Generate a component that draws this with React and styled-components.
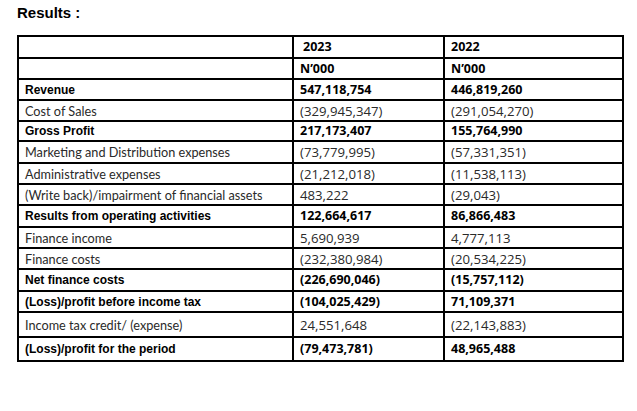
import React from "react";
import styled, { createGlobalStyle } from "styled-components";

const GlobalStyle = createGlobalStyle`
    html, body {
        margin: 0;
        padding: 0;
        background: #ffffff;
    }
`;

const Page = styled.div`
    width: 637px;
    height: 411px;
    padding: 4px 0 0 17px;
    box-sizing: border-box;
    background: #ffffff;
`;

const Title = styled.h2`
    margin: 0 0 14px 0;
    font-family: "Liberation Sans", Arial, sans-serif;
    font-weight: 700;
    font-size: 15px;
    line-height: 17px;
    color: #000;
`;

const Table = styled.table`
    border-collapse: collapse;
    table-layout: fixed;
    width: 605px;
    border: 2px solid #000;
`;

const Row = styled.tr`
    height: ${(props) => props.h}px;
`;

const Cell = styled.td`
    border: 2px solid #000;
    padding: 0 0 0 ${(props) => (props.indent ? 9 : 6)}px;
    vertical-align: middle;
    white-space: nowrap;
    line-height: 14px;
    font-family: ${(props) =>
        props.num
            ? `"Open Sans", "Noto Sans", sans-serif`
            : props.bold
            ? `"Liberation Sans", Arial, sans-serif`
            : `Lato, "Open Sans", sans-serif`};
    font-size: ${(props) =>
        props.num ? (props.bold ? 12.5 : 13.2) : props.bold ? 12 : 12.7}px;
    font-weight: ${(props) => (props.bold ? 700 : 400)};
    color: ${(props) => (props.bold ? "#000" : "#2a2a2a")};
`;

const rows = [
    { label: "Revenue", a: "547,118,754", b: "446,819,260", bold: true, h: 21 },
    { label: "Cost of Sales", a: "(329,945,347)", b: "(291,054,270)", h: 21 },
    { label: "Gross Profit", a: "217,173,407", b: "155,764,990", bold: true, h: 20 },
    { label: "Marketing and Distribution expenses", a: "(73,779,995)", b: "(57,331,351)", h: 22 },
    { label: "Administrative expenses", a: "(21,212,018)", b: "(11,538,113)", h: 21 },
    { label: "(Write back)/impairment of financial assets", a: "483,222", b: "(29,043)", h: 21 },
    { label: "Results from operating activities", a: "122,664,617", b: "86,866,483", bold: true, h: 22 },
    { label: "Finance income", a: "5,690,939", b: "4,777,113", h: 21 },
    { label: "Finance costs", a: "(232,380,984)", b: "(20,534,225)", h: 21 },
    { label: "Net finance costs", a: "(226,690,046)", b: "(15,757,112)", bold: true, h: 22 },
    { label: "(Loss)/profit before income tax", a: "(104,025,429)", b: "71,109,371", bold: true, h: 21 },
    { label: "Income tax credit/ (expense)", a: "24,551,648", b: "(22,143,883)", h: 25 },
    { label: "(Loss)/profit for the period", a: "(79,473,781)", b: "48,965,488", bold: true, h: 24 },
];

export default function App() {
    return (
        <>
            <GlobalStyle />
            <Page>
                <Title>Results :</Title>
                <Table>
                    <colgroup>
                        <col style={{ width: 275 }} />
                        <col style={{ width: 151 }} />
                        <col style={{ width: 179 }} />
                    </colgroup>
                    <tbody>
                        <Row h={22}>
                            <Cell />
                            <Cell num bold indent>
                                2023
                            </Cell>
                            <Cell num bold>
                                2022
                            </Cell>
                        </Row>
                        <Row h={21}>
                            <Cell />
                            <Cell num bold>
                                N’000
                            </Cell>
                            <Cell num bold>
                                N’000
                            </Cell>
                        </Row>
                        {rows.map((r) => (
                            <Row key={r.label} h={r.h}>
                                <Cell bold={r.bold}>{r.label}</Cell>
                                <Cell num bold={r.bold}>
                                    {r.a}
                                </Cell>
                                <Cell num bold={r.bold}>
                                    {r.b}
                                </Cell>
                            </Row>
                        ))}
                    </tbody>
                </Table>
            </Page>
        </>
    );
}
